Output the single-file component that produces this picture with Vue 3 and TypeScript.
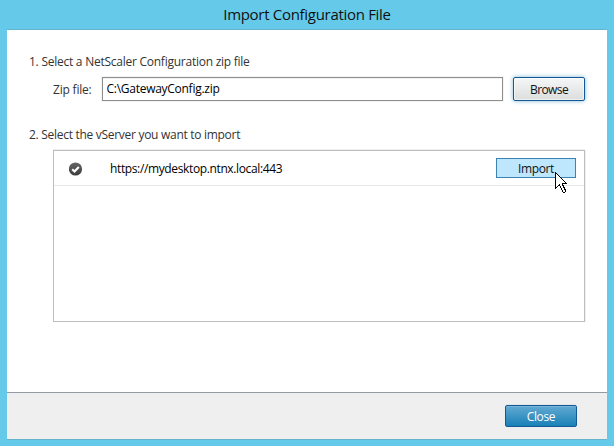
<script setup lang="ts">
import { ref } from 'vue'

interface VServer {
  url: string
  ready: boolean
}

const zipPath = ref<string>('C:\\GatewayConfig.zip')
const servers = ref<VServer[]>([{ url: 'https://mydesktop.ntnx.local:443', ready: true }])
</script>

<template>
  <div class="window">
    <header class="titlebar"><span class="title">Import Configuration File</span></header>
    <main class="content">
      <h2 class="step">1. Select a NetScaler Configuration zip file</h2>
      <div class="file-row">
        <label class="file-label" for="zip">Zip file:</label>
        <input id="zip" v-model="zipPath" class="file-input" type="text" spellcheck="false" />
        <button class="btn browse"><span>Browse</span></button>
      </div>
      <h2 class="step second">2. Select the vServer you want to import</h2>
      <div class="list">
        <div v-for="s in servers" :key="s.url" class="list-row">
          <svg v-if="s.ready" class="check" viewBox="0 0 14 14">
            <defs>
              <linearGradient id="disc" x1="0" y1="0" x2="0" y2="1">
                <stop offset="0" stop-color="#666" />
                <stop offset="1" stop-color="#3c3c3c" />
              </linearGradient>
            </defs>
            <circle cx="6.5" cy="7" r="6.6" fill="url(#disc)" />
            <path d="M3.2 7.2 5.5 9.4 9.8 4.9" fill="none" stroke="#fff" stroke-width="2.1" />
          </svg>
          <span class="url">{{ s.url }}</span>
          <button class="btn import">
            <span>Import</span>
            <svg class="cursor" viewBox="0 0 13 22" shape-rendering="crispEdges">
              <path
                d="M0.5 0.5V16.5L4.5 12.5L7.5 19.5L8.5 20.5H9.5L10.5 19.5V18.5L7.5 12.5V11.5H11.5Z"
                fill="#fff"
                stroke="#000"
              />
            </svg>
          </button>
        </div>
      </div>
    </main>
    <footer class="footer">
      <button class="btn close"><span>Close</span></button>
    </footer>
  </div>
</template>

<style>
body {
  margin: 0;
  overflow: hidden;
}
</style>

<style scoped>
.window {
  box-sizing: border-box;
  width: 614px;
  height: 446px;
  padding: 0 7px 6px;
  display: flex;
  flex-direction: column;
  background: #65c9ea;
  font-family: 'Open Sans', 'Noto Sans', sans-serif;
  font-size: 12px;
  color: #333;
  white-space: nowrap;
}
.titlebar {
  box-sizing: border-box;
  height: 30px;
  flex: none;
  display: flex;
  justify-content: center;
  border-bottom: 1px solid #68b3cc;
  color: #111;
  font-size: 15px;
  line-height: 28px;
}
.title {
  letter-spacing: -0.3px;
}
.content {
  flex: 1;
  box-sizing: border-box;
  padding: 22px 22px 0;
  background: #fff;
}
.step {
  margin: 0;
  height: 20px;
  font-size: 12px;
  font-weight: 400;
  letter-spacing: -0.25px;
  line-height: 20px;
}
.file-row {
  display: flex;
  align-items: center;
  height: 24px;
  margin-top: 5px;
  padding-left: 24px;
}
.file-label {
  width: 49px;
  padding-top: 2px;
  letter-spacing: -0.2px;
  line-height: 24px;
}
.file-input {
  box-sizing: border-box;
  width: 401px;
  height: 24px;
  margin: 0 10px 0 0;
  padding: 0 3px 1px 3.5px;
  border: 1px solid #8e8e8e;
  border-radius: 0;
  outline: 0;
  background: #fff;
  box-shadow: 0 0 0 1px #f4f4f4, inset 0 1px 0 #f1f1f1;
  color: #000;
  font: inherit;
  letter-spacing: -0.27px;
}
.btn {
  box-sizing: border-box;
  padding: 0;
  display: flex;
  align-items: center;
  justify-content: center;
  flex: none;
  color: #111;
  font: inherit;
}
.browse {
  width: 72px;
  height: 24px;
  padding-top: 1px;
  border: 1px solid #135997;
  border-radius: 2px;
  background: linear-gradient(#f5f6f7, #dcdddd);
  box-shadow: 0 0 4px 0 #7fb5d4, inset 0 0 0 1px rgba(255, 255, 255, 0.55);
  letter-spacing: -0.6px;
}
.second {
  margin-top: 24px;
  letter-spacing: -0.29px;
}
.list {
  box-sizing: border-box;
  width: 532px;
  height: 172px;
  margin: 5px 0 0 24px;
  border: 1px solid #bdbdbd;
  box-shadow: 0 -1px 0 #f0f0f0, 1px 0 0 #f0f0f0;
}
.list-row {
  box-sizing: border-box;
  height: 35px;
  padding: 0 8px 0 15px;
  display: flex;
  align-items: center;
  border-bottom: 1px solid #e8e8e8;
  color: #000;
}
.check {
  width: 14px;
  height: 14px;
  margin-top: 2px;
  flex: none;
}
.url {
  flex: 1;
  margin-left: 27px;
  padding-top: 1px;
  letter-spacing: -0.37px;
}
.import {
  position: relative;
  width: 80px;
  height: 20px;
  padding-top: 1px;
  border: 1px solid #3b83b5;
  border-radius: 0;
  background: #bee6fd;
  letter-spacing: -0.35px;
}
.cursor {
  position: absolute;
  left: 58px;
  top: 13px;
  width: 13px;
  height: 22px;
}
.footer {
  box-sizing: border-box;
  height: 48px;
  flex: none;
  padding: 12px 30px 0 0;
  display: flex;
  justify-content: flex-end;
  border-top: 1px solid #929ba3;
  border-bottom: 1px solid #68b3cc;
  background: #efefef;
}
.close {
  width: 72px;
  height: 22px;
  padding-top: 1px;
  border: 1px solid #135997;
  border-radius: 2px;
  background: linear-gradient(#61aad3, #1a80b6);
  box-shadow: 0 -1px 0 #e6e6e6, inset 0 1px 0 rgba(255, 255, 255, 0.15);
  color: #fff;
  letter-spacing: -0.35px;
}
</style>
